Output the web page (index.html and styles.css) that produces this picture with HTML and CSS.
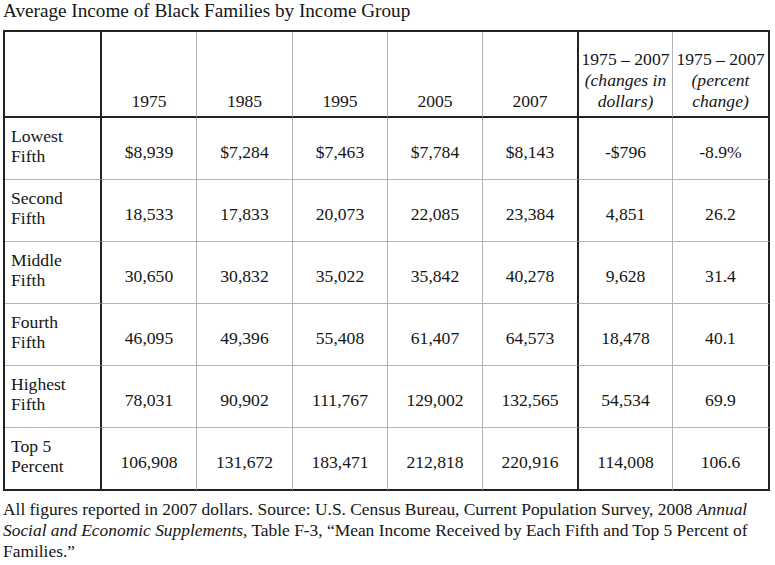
FILE: index.html
```html
<!DOCTYPE html>
<html>
<head>
<meta charset="utf-8">
<link rel="stylesheet" href="styles.css">
</head>
<body>
<h1 class="title">Average Income of Black Families by Income Group</h1>
<table class="income">
  <colgroup>
    <col class="c1"><col class="c2"><col class="c3"><col class="c4"><col class="c5"><col class="c6"><col class="c7"><col class="c8">
  </colgroup>
  <thead>
    <tr class="head">
      <th class="label"></th>
      <th>1975</th>
      <th>1985</th>
      <th>1995</th>
      <th>2005</th>
      <th class="sep">2007</th>
      <th>1975 – 2007<br><em>(changes in<br>dollars)</em></th>
      <th class="last">1975 – 2007<br><em>(percent<br>change)</em></th>
    </tr>
  </thead>
  <tbody>
    <tr>
      <td class="label">Lowest<br>Fifth</td>
      <td>$8,939</td><td>$7,284</td><td>$7,463</td><td>$7,784</td><td class="sep">$8,143</td><td>-$796</td><td class="last">-8.9%</td>
    </tr>
    <tr>
      <td class="label">Second<br>Fifth</td>
      <td>18,533</td><td>17,833</td><td>20,073</td><td>22,085</td><td class="sep">23,384</td><td>4,851</td><td class="last">26.2</td>
    </tr>
    <tr>
      <td class="label">Middle<br>Fifth</td>
      <td>30,650</td><td>30,832</td><td>35,022</td><td>35,842</td><td class="sep">40,278</td><td>9,628</td><td class="last">31.4</td>
    </tr>
    <tr>
      <td class="label">Fourth<br>Fifth</td>
      <td>46,095</td><td>49,396</td><td>55,408</td><td>61,407</td><td class="sep">64,573</td><td>18,478</td><td class="last">40.1</td>
    </tr>
    <tr>
      <td class="label">Highest<br>Fifth</td>
      <td>78,031</td><td>90,902</td><td>111,767</td><td>129,002</td><td class="sep">132,565</td><td>54,534</td><td class="last">69.9</td>
    </tr>
    <tr class="final">
      <td class="label">Top 5<br>Percent</td>
      <td>106,908</td><td>131,672</td><td>183,471</td><td>212,818</td><td class="sep">220,916</td><td>114,008</td><td class="last">106.6</td>
    </tr>
  </tbody>
</table>
<p class="note">All figures reported in 2007 dollars. Source: U.S. Census Bureau, Current Population Survey, 2008 <em>Annual</em><br><em>Social and Economic Supplements</em>, Table F-3, “Mean Income Received by Each Fifth and Top 5 Percent of<br>Families.”</p>
</body>
</html>
```

FILE: styles.css
```css
html, body {
  margin: 0;
  padding: 0;
  background: #ffffff;
}

body {
  padding: 0 3px;
  font-family: "Liberation Serif", "Times New Roman", serif;
  color: #151515;
}

.title {
  margin: 0 0 8px 0;
  font-size: 19.2px;
  line-height: 22px;
  font-weight: normal;
}

.income {
  border-collapse: separate;
  border-spacing: 0;
  table-layout: fixed;
  width: 767px;
  border-top: 2px solid #222;
  border-left: 2px solid #222;
  font-family: "Liberation Serif", "Times New Roman", serif;
  font-size: 17.6px;
  line-height: 20px;
  color: #151515;
}

.c1 { width: 97px; }
.c2 { width: 95px; }
.c3 { width: 96px; }
.c4 { width: 95px; }
.c5 { width: 95px; }
.c6 { width: 96px; }
.c7 { width: 94px; }
.c8 { width: 97px; }

.income th,
.income td {
  box-sizing: border-box;
  font-size: 17.6px;
  border-right: 1px solid #b4b4b4;
  border-bottom: 1px solid #b4b4b4;
  text-align: center;
  padding: 0 2px;
}

.income th {
  font-weight: normal;
  vertical-align: bottom;
  height: 86px;
  padding-bottom: 4px;
  line-height: 21px;
  border-bottom: 2px solid #222;
}

.income td {
  height: 62px;
  vertical-align: bottom;
  padding-bottom: 17px;
}

.income .label {
  text-align: left;
  vertical-align: top;
  padding: 8px 4px 0 6px;
  border-right: 2px solid #222;
}

.income .sep,
.income .last {
  border-right: 2px solid #222;
}

.income .final td {
  border-bottom: 2px solid #222;
  height: 63px;
}

.note {
  margin: 8px 0 0 0;
  font-size: 17.4px;
  line-height: 21px;
}
```
